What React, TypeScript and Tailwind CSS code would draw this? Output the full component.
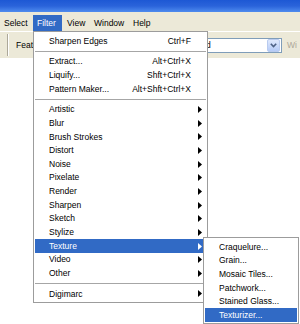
import React from "react";

type Item =
  | { type: "sep" }
  | { type: "item"; label: string; shortcut?: string; sub?: boolean; active?: boolean };

const filterItems: Item[] = [
  { type: "item", label: "Sharpen Edges", shortcut: "Ctrl+F" },
  { type: "sep" },
  { type: "item", label: "Extract...", shortcut: "Alt+Ctrl+X" },
  { type: "item", label: "Liquify...", shortcut: "Shft+Ctrl+X" },
  { type: "item", label: "Pattern Maker...", shortcut: "Alt+Shft+Ctrl+X" },
  { type: "sep" },
  { type: "item", label: "Artistic", sub: true },
  { type: "item", label: "Blur", sub: true },
  { type: "item", label: "Brush Strokes", sub: true },
  { type: "item", label: "Distort", sub: true },
  { type: "item", label: "Noise", sub: true },
  { type: "item", label: "Pixelate", sub: true },
  { type: "item", label: "Render", sub: true },
  { type: "item", label: "Sharpen", sub: true },
  { type: "item", label: "Sketch", sub: true },
  { type: "item", label: "Stylize", sub: true },
  { type: "item", label: "Texture", sub: true, active: true },
  { type: "item", label: "Video", sub: true },
  { type: "item", label: "Other", sub: true },
  { type: "sep" },
  { type: "item", label: "Digimarc", sub: true },
];

const textureItems = [
  "Craquelure...",
  "Grain...",
  "Mosaic Tiles...",
  "Patchwork...",
  "Stained Glass...",
  "Texturizer...",
];

function Arrow({ white }: { white?: boolean }) {
  return (
    <svg width="4" height="7" viewBox="0 0 4 7" className={white ? "fill-white" : "fill-black"}>
      <path d="M0 0 L4 3.5 L0 7 Z" />
    </svg>
  );
}

function MenuRow({ item }: { item: Item }) {
  if (item.type === "sep") {
    return (
      <div className="h-[7px] flex items-center">
        <div className="h-px w-full bg-[#A6A6A6]" />
      </div>
    );
  }
  return (
    <div
      className={`h-[13.67px] flex items-center justify-between pl-[14px] ${
        item.sub ? "pr-[4px]" : "pr-[15px]"
      } ${item.active ? "bg-[#316AC5] text-white" : "text-black"}`}
    >
      <span>{item.label}</span>
      {item.shortcut && <span>{item.shortcut}</span>}
      {item.sub && <Arrow white={item.active} />}
    </div>
  );
}

export default function App() {
  return (
    <div className="relative w-[300px] h-[324px] overflow-hidden bg-white font-['Liberation_Sans',Arial,sans-serif] text-[8.5px] leading-none">
      {/* title strip */}
      <div className="h-[12px] bg-gradient-to-b from-[#1D58D4] via-[#2A63DA] to-[#4F8BEE]" />

      {/* menu bar */}
      <div className="h-[19px] bg-[#ECE9D8] flex items-end text-black">
        <div className="w-[33px] h-[16px] flex items-center pl-[4px]">Select</div>
        <div className="w-[29px] h-[16px] flex items-center pl-[4px] bg-[#316AC5] text-white">Filter</div>
        <div className="w-[27px] h-[16px] flex items-center pl-[5px]">View</div>
        <div className="w-[39px] h-[16px] flex items-center pl-[5px]">Window</div>
        <div className="h-[16px] flex items-center pl-[5px]">Help</div>
      </div>

      {/* options toolbar */}
      <div className="h-[27px] bg-[#ECE9D8] border-t border-white flex items-center relative">
        <div className="ml-[7px] h-[22px] w-[2px] border-l border-[#ACA899] border-r border-r-white" />
        <span className="ml-[7px] text-black">Feather:</span>
        <div className="ml-auto mr-[18px] w-[78px] h-[15px] border border-[#7F9DB9] bg-white flex items-center justify-between">
          <span className="pl-[1px] text-black">d</span>
          <div className="w-[13px] h-[13px] mr-px rounded-[2px] bg-gradient-to-b from-[#E0E9FD] to-[#B5CBF7] border border-[#B9CBEF] flex items-center justify-center">
            <svg width="7" height="5" viewBox="0 0 7 5">
              <path d="M0.8 0.8 L3.5 3.6 L6.2 0.8" stroke="#4D6185" strokeWidth="1.6" fill="none" />
            </svg>
          </div>
        </div>
        <span className="absolute left-[287px] top-[9px] text-[#ACA899] whitespace-nowrap">Wi</span>
      </div>

      {/* Filter menu */}
      <div className="absolute left-[33px] top-[31px] w-[175px] bg-white border border-[#9C9C9C] px-[1px] pt-[2px] pb-[1px] z-10">
        {filterItems.map((it, i) => (
          <MenuRow key={i} item={it} />
        ))}
      </div>

      {/* Texture submenu */}
      <div className="absolute left-[203px] top-[237px] w-[96px] bg-white border border-[#9C9C9C] px-[1px] pt-[2px] pb-[1px] z-20">
        {textureItems.map((label, i) => (
          <div
            key={label}
            className={`h-[13.67px] flex items-center pl-[14px] ${
              i === textureItems.length - 1 ? "bg-[#316AC5] text-white" : "text-black"
            }`}
          >
            {label}
          </div>
        ))}
      </div>
    </div>
  );
}
